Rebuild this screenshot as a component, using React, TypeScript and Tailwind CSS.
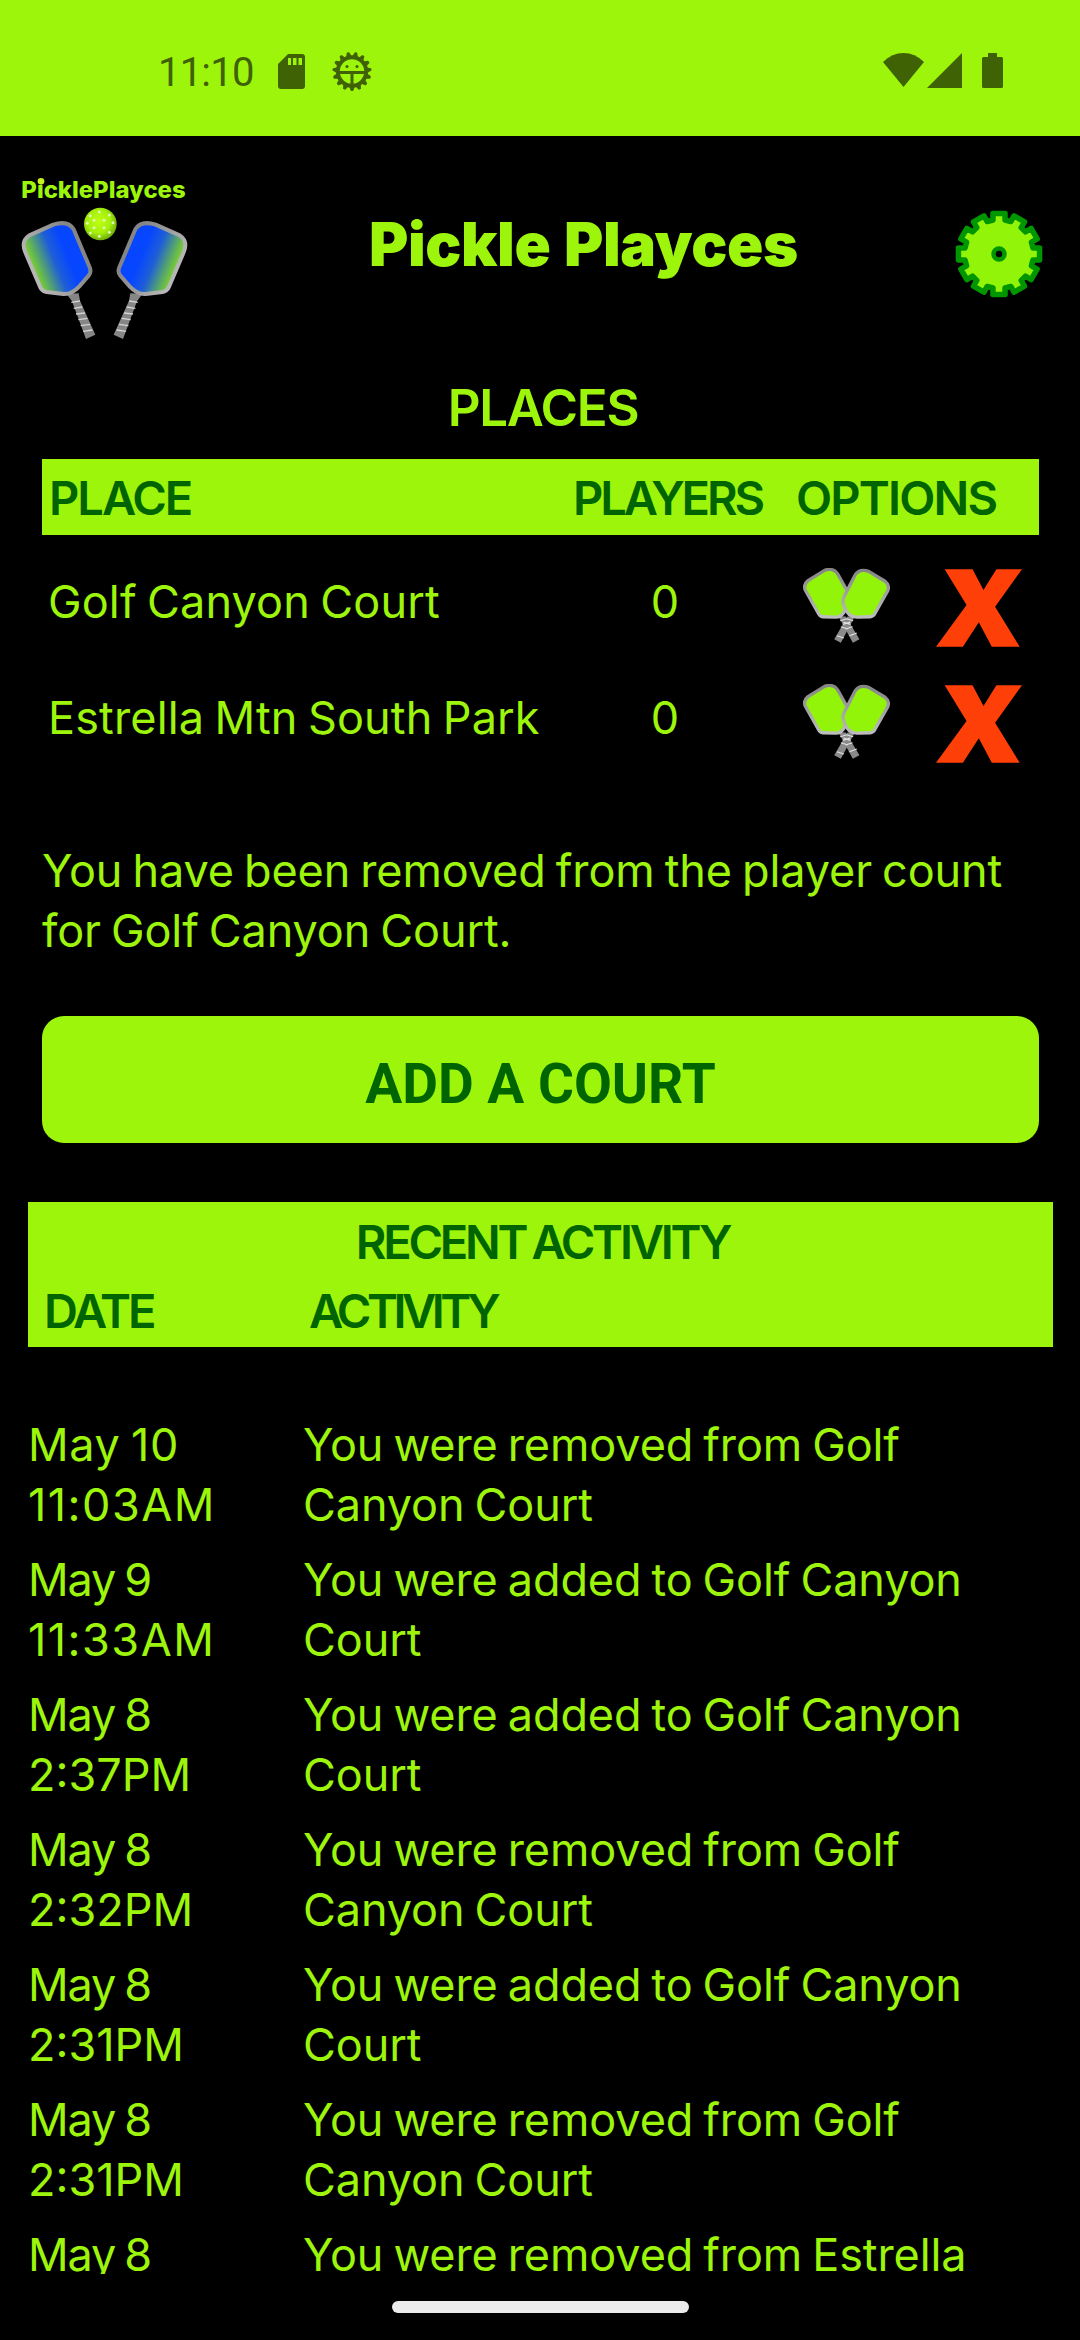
import React from "react";

interface Place {
  name: string;
  players: number;
}

interface Activity {
  day: string;
  time?: string;
  lines: string[];
}

const places: Place[] = [
  { name: "Golf Canyon Court", players: 0 },
  { name: "Estrella Mtn South Park", players: 0 },
];

const activities: Activity[] = [
  { day: "May 10", time: "11:03AM", lines: ["You were removed from Golf", "Canyon Court"] },
  { day: "May 9", time: "11:33AM", lines: ["You were added to Golf Canyon", "Court"] },
  { day: "May 8", time: "2:37PM", lines: ["You were added to Golf Canyon", "Court"] },
  { day: "May 8", time: "2:32PM", lines: ["You were removed from Golf", "Canyon Court"] },
  { day: "May 8", time: "2:31PM", lines: ["You were added to Golf Canyon", "Court"] },
  { day: "May 8", time: "2:31PM", lines: ["You were removed from Golf", "Canyon Court"] },
  { day: "May 8", lines: ["You were removed from Estrella"] },
];

// point on a circle, angle in degrees clockwise from the top
const polar = (cx: number, cy: number, r: number, deg: number) => {
  const a = ((deg - 90) * Math.PI) / 180;
  return `${(cx + r * Math.cos(a)).toFixed(2)},${(cy + r * Math.sin(a)).toFixed(2)}`;
};

const StatusBar: React.FC = () => (
  <div className="flex h-[136px] shrink-0 items-start bg-[#9df50c] pt-[52px] text-[#3f6205]">
    <span className="ml-[158px] w-[120px] pt-px font-[Roboto,sans-serif] text-[40px] leading-[40px] tracking-[-0.8px]">
      11:10
    </span>
    {/* SD card */}
    <svg className="mt-[2px] h-[35px] w-[27px]" viewBox="0 0 27 35" fill="currentColor">
      <path
        fillRule="evenodd"
        d="M10 0H24Q27 0 27 3V32Q27 35 24 35H3Q0 35 0 32V10ZM10 4V11H13V4ZM15 4V11H18.500V4ZM20.500 4V11H24V4Z"
      />
    </svg>
    {/* Debug gear */}
    <svg className="ml-[27px] h-10 w-10" viewBox="0 0 40 40" fill="none" stroke="currentColor">
      <circle cx="20" cy="19.500" r="14.200" strokeWidth="4" />
      {Array.from({ length: 15 }).map((_, i) => {
        const deg = 12 + i * 24;
        return (
          <polygon
            key={i}
            fill="currentColor"
            stroke="currentColor"
            strokeWidth="1.500"
            strokeLinejoin="round"
            points={[
              polar(20, 19.5, 15, deg - 8),
              polar(20, 19.5, 18.8, deg - 2),
              polar(20, 19.5, 18.8, deg + 2),
              polar(20, 19.5, 15, deg + 8),
            ].join(" ")}
          />
        );
      })}
      <path d="M7 20.500H33M20 20.500V33" strokeWidth="3" />
      <circle cx="15" cy="14.500" r="1.500" fill="currentColor" stroke="none" />
      <circle cx="25" cy="14.500" r="1.500" fill="currentColor" stroke="none" />
    </svg>
    {/* Wifi, signal and battery */}
    <svg className="ml-auto h-[35px] w-[41px]" viewBox="0 0 41 35" fill="currentColor">
      <path d="M20.500 35L0 10Q9 1 20.500 1T41 10Z" />
    </svg>
    <svg className="ml-[3px] h-9 w-[35px]" viewBox="0 0 35 36" fill="currentColor">
      <path d="M0 36L35 1V36Z" />
    </svg>
    <svg className="mr-[77px] ml-5 h-9 w-[21px]" viewBox="0 0 21 36" fill="currentColor">
      <path d="M6 1H15V5H19.500Q21 5 21 6.500V34.500Q21 36 19.500 36H1.500Q0 36 0 34.500V6.500Q0 5 1.500 5H6Z" />
    </svg>
  </div>
);

const LogoPaddle: React.FC = () => (
  <g>
    <path d="M200 402L236 400L240 422L286 524L258 537L216 424Z" fill="#868686" />
    <path
      d="M214 427L240 423M221 445L247 441M228 462L255 459M235 479L262 475M242 497L270 493M249 514L277 510"
      stroke="#d4d4d4"
      strokeWidth="4"
    />
    <path
      d="M160 194Q204 180 221 208L269 322Q275 337 266 347L238 379Q215 404 190 402L140 396Q126 393 121 382L76 277Q62 243 88 226Z"
      fill="url(#paddleFace)"
      stroke="url(#paddleEdge)"
      strokeWidth="12"
      strokeLinejoin="round"
    />
  </g>
);

const Logo: React.FC = () => (
  <svg className="h-[200px] w-[220px]" viewBox="0 0 660 600">
    <defs>
      <linearGradient id="paddleFace" gradientUnits="userSpaceOnUse" x1="88" y1="325" x2="200" y2="280">
        <stop offset="0" stopColor="#8be01f" />
        <stop offset="0.250" stopColor="#62b455" />
        <stop offset="0.650" stopColor="#1f5fd6" />
        <stop offset="1" stopColor="#0646ff" />
      </linearGradient>
      <linearGradient id="paddleEdge" gradientUnits="userSpaceOnUse" x1="80" y1="340" x2="230" y2="260">
        <stop offset="0" stopColor="#bdbdbd" />
        <stop offset="1" stopColor="#858585" />
      </linearGradient>
      <radialGradient id="ball" cx="0.450" cy="0.420" r="0.600">
        <stop offset="0" stopColor="#c0ff10" />
        <stop offset="0.600" stopColor="#a4f00c" />
        <stop offset="1" stopColor="#6da80a" />
      </radialGradient>
    </defs>
    <text
      x="64"
      y="114"
      textLength="493"
      lengthAdjust="spacingAndGlyphs"
      className="fill-[#9df50c] font-[Inter,sans-serif] text-[67px] font-extrabold tracking-normal"
    >
      PicklePlayces
    </text>
    <circle cx="123" cy="64" r="10" fill="#c6f222" />
    <LogoPaddle />
    <g transform="translate(627 0) scale(-1 1)">
      <LogoPaddle />
    </g>
    <circle cx="301" cy="192" r="49" fill="url(#ball)" />
    <g fill="#dff5b4">
      {[
        [298, 156], [271, 167], [328, 165], [282, 181], [312, 181], [262, 190],
        [339, 188], [282, 203], [312, 203], [271, 219], [328, 217], [298, 229],
      ].map(([x, y]) => (
        <circle key={`${x}-${y}`} cx={x} cy={y} r="4.500" />
      ))}
    </g>
  </svg>
);

const SettingsGear: React.FC = () => {
  const teeth = Array.from({ length: 12 }).flatMap((_, i) => {
    const deg = i * 30;
    return [
      polar(45, 45, 34.5, deg - 10),
      polar(45, 45, 41, deg - 8.5),
      polar(45, 45, 41, deg + 8.5),
      polar(45, 45, 34.5, deg + 10),
    ];
  });
  return (
    <svg className="mt-[49px] mr-9 ml-auto h-[90px] w-[90px]" viewBox="0 0 90 90">
      <polygon points={teeth.join(" ")} fill="#92f408" stroke="#009600" strokeWidth="5.500" strokeLinejoin="round" />
      <circle cx="45" cy="45" r="5.500" fill="#000" stroke="#009600" strokeWidth="4.500" />
    </svg>
  );
};

const PaddlesIcon: React.FC = () => (
  <svg className="mt-[15px] h-[75px] w-[87px]" viewBox="100 84 262 226">
    <defs>
      <linearGradient id="rim" x1="0" y1="0" x2="0" y2="1">
        <stop offset="0" stopColor="#858585" />
        <stop offset="1" stopColor="#bdbdbd" />
      </linearGradient>
    </defs>
    <path d="M207 230L229 230L270 299L250 309Z" fill="#8a8a8a" />
    <path d="M256 230L234 230L194 299L214 309Z" fill="#8a8a8a" />
    <path
      d="M212 243L232 237M220 254L242 247M228 268L249 261M240 288L262 280M251 243L231 237M243 254L222 247M235 268L214 261M223 295L202 288"
      stroke="#e2e2e2"
      strokeWidth="3.500"
    />
    <g fill="#92f408" stroke="url(#rim)" strokeWidth="10" strokeLinejoin="round">
      <path d="M165 91Q192 82 205 103L235 157Q240 170 234 182L226 212Q218 232 200 232L160 231Q151 230 147 222L107 151Q100 134 115 122Z" />
      <path d="M298 94Q270 85 257 105L225 168Q216 183 224 199Q235 233 265 232L302 231Q311 230 316 222L355 153Q362 136 347 124Z" />
    </g>
  </svg>
);

const RemoveIcon: React.FC = () => (
  <svg className="mt-4 ml-[46px] h-[78px] w-[86px]" viewBox="0 0 259 234">
    <polygon
      points="26,0 110,0 143,63 182,0 259,0 178,113 252,234 168,234 129,160 81,234 0,234 92,108"
      fill="#ff3f08"
    />
  </svg>
);

const App: React.FC = () => {
  return (
    <div className="flex h-[2340px] w-[1080px] flex-col overflow-hidden bg-black font-[Inter,sans-serif] text-[45px] leading-[60px] tracking-[-0.1px] text-[#9df50c] [word-spacing:-2.5px]">
      <StatusBar />

      {/* Header */}
      <header className="flex h-[241px] shrink-0 items-start pt-6">
        <Logo />
        <h1 className="mt-[54px] ml-[149px] text-[60px] leading-[60px] font-black tracking-[-0.4px] [word-spacing:2px]">
          Pickle Playces
        </h1>
        <SettingsGear />
      </header>

      {/* Places */}
      <section className="mr-[41px] ml-[42px]">
        <h2 className="pl-[5px] text-center text-[51px] leading-[61px] font-semibold tracking-[-1.3px]">PLACES</h2>
        <div className="mt-[21px] flex h-[76px] items-center bg-[#9df50c] pt-[2px] pl-[7px] text-[47px] font-semibold text-[#006400]">
          <span className="w-[524px] tracking-[-2px]">PLACE</span>
          <span className="w-[223px] tracking-[-3.1px]">PLAYERS</span>
          <span className="tracking-[-1.8px]">OPTIONS</span>
        </div>
        <div className="mt-[18px]">
          {places.map((p) => (
            <div key={p.name} className="flex h-[116px] items-start pl-[6px]">
              <span className="mt-[19px] w-[521px] tracking-[0.15px]">{p.name}</span>
              <span className="mt-[19px] w-[192px] text-center">{p.players}</span>
              <div className="ml-[42px] flex items-start">
                <PaddlesIcon />
                <RemoveIcon />
              </div>
            </div>
          ))}
        </div>
        <p className="mt-[56px]">
          You have been removed from the player count
          <br />
          for Golf Canyon Court.
        </p>
        <button className="mt-[55px] flex h-[127px] w-full items-center justify-center rounded-[22px] bg-[#9df50c] pt-[9px] font-[Roboto,sans-serif] text-[55px] font-bold tracking-normal text-[#006400] [word-spacing:normal]">
          ADD A COURT
        </button>
      </section>

      {/* Recent activity */}
      <section className="mt-[59px] mr-[27px] ml-7">
        <div className="h-[145px] bg-[#9df50c] pt-[5px] text-[47px] leading-[69px] font-semibold text-[#006400]">
          <h2 className="pl-1 text-center tracking-[-3.2px]">RECENT ACTIVITY</h2>
          <div className="flex pl-4">
            <span className="w-[265px] tracking-[-3.1px]">DATE</span>
            <span className="tracking-[-4.5px]">ACTIVITY</span>
          </div>
        </div>
        <div className="mt-[68px] flex h-[859px] flex-col gap-[15px] overflow-hidden">
          {activities.map((a, i) => (
            <div key={i} className="flex shrink-0">
              <div className="w-[275px]">
                <div className={a.day.length > 5 ? "tracking-[0.6px]" : "tracking-[-1.1px]"}>{a.day}</div>
                <div className={a.time?.startsWith("11") ? "tracking-[1.5px]" : "tracking-normal"}>{a.time}</div>
              </div>
              <div>
                {a.lines.map((line) => (
                  <div key={line}>{line}</div>
                ))}
              </div>
            </div>
          ))}
        </div>
      </section>

      {/* Home indicator */}
      <div className="mt-[27px] h-3 w-[297px] shrink-0 self-center rounded-full bg-[#ececec]" />
    </div>
  );
};

export default App;
